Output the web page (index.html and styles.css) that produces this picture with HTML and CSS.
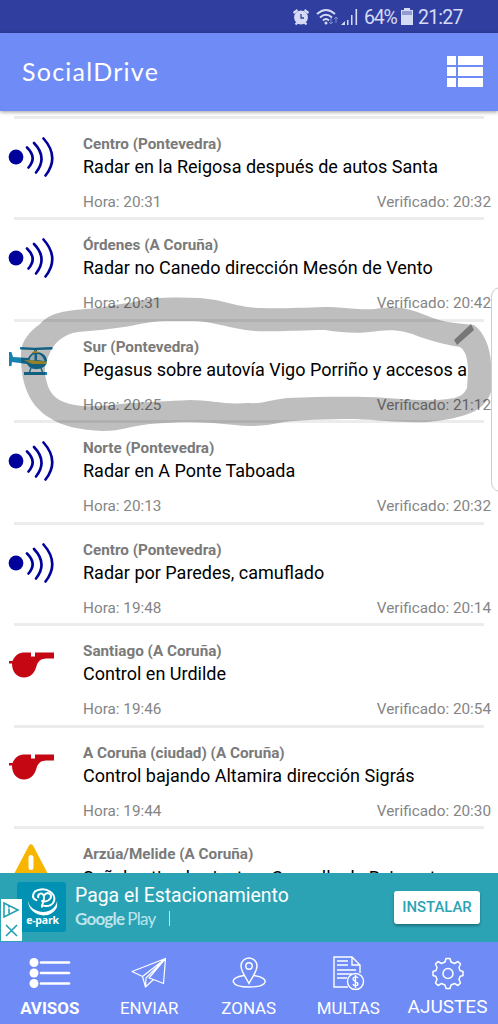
FILE: index.html
```html
<!DOCTYPE html>
<html lang="es">
<head>
<meta charset="utf-8">
<title>SocialDrive</title>
<link rel="stylesheet" href="styles.css">
</head>
<body>
<svg class="defs" width="0" height="0">
  <symbol id="radar" viewBox="0 0 48 42">
    <circle cx="8" cy="21" r="7.4" fill="#00009b"/>
    <g fill="none" stroke="#00009b" stroke-width="2.600" stroke-linecap="round">
      <path d="M19 11.500q10.500 10 1.500 20M26 7q14 14.500 2 29.500M35.500 2.500q16.500 18.500 2 37"/>
    </g>
  </symbol>
  <symbol id="whistle" viewBox="0 0 46 28">
    <path fill="#c40712" d="M0 10h3.500C6 4 10 1.500 16 1.500h6v4h4v-4h19v6h-6c-7 0-9 2-11 6-2 8-6 13-13 13C8 26.500 3 21 3 12.500H0z"/>
  </symbol>
  <symbol id="copter" viewBox="0 0 46 32">
    <path fill="#1782af" d="M11 1l14 .7L43.500 1v2.500L28 4v3h-3V4L11 3.500zM0 6h2.500l1.500 5 15 1c2-4 5-6 9-6 6 0 11 5 10 11-3 7-16 9-20 1L3 16l-.5 4H0zM15 26h23v3H15z"/>
    <path fill="#d3e2e8" d="M25.500 8v6.500h-5c.5-3 2-5.500 5-6.500zM28 8c4 0 6 3 7.500 7l-7.500-1z"/>
    <path fill="#c8ac32" d="M22.500 7l4-3 4 3zM15 14l23 1.500-1 2.500-14 0z"/>
    <path stroke="#1782af" stroke-width="1.400" fill="none" d="M22 22l-1.500 4M32 22l1.500 4"/>
  </symbol>
</svg>

<div class="status">
  <svg width="18" height="18" viewBox="0 0 17 18"><circle cx="8.500" cy="9.500" r="6.900" fill="#d5dbf5"/><path d="M1 5l4-3M16 5l-4-3M3 16.500l2-2M14 16.500l-2-2" stroke="#d5dbf5" stroke-width="2.200"/><path d="M8.500 6v4h3" fill="none" stroke="#303f9f" stroke-width="1.300"/></svg>
  <svg class="wifi" width="23" height="18" viewBox="0 0 23 18"><g fill="none" stroke="#d5dbf5" stroke-width="1.900"><path d="M1 6q9-8 18 0M4 9.500q6-5.500 12 0M7 12.500q3-3 6 0"/></g><circle cx="10" cy="15" r="1.500" fill="#d5dbf5"/><path d="M15 10v6m-2-2l2 2 2-2M20 15V9m-2 2l2-2 2 2" fill="none" stroke="#7f8bd0"/></svg>
  <svg class="signal" width="18" height="18" viewBox="0 0 18 18"><path d="M1 17l4-4v4zM7 12h1.500v5H7zM11 7h1.500v10H11zM15.500 1h1.600v16h-1.600z" fill="#d5dbf5"/></svg>
  <span class="pct">64%</span>
  <svg class="battery" width="12" height="18" viewBox="0 0 12 18"><path d="M3 0h6v2h3v15H0V2h3z" fill="#d5dbf5"/><path d="M1 3h10v4H1z" fill="#929dcf"/></svg>
  <span class="clock">21:27</span>
</div>

<header class="bar">
  <h1>SocialDrive</h1>
  <svg width="36" height="32" viewBox="0 0 36 32"><path fill="#fff" d="M0 0h9v9H0zM11 0h25v9H11zM0 11h9v9H0zM11 11h25v9H11zM0 22h9v9H0zM11 22h25v9H11z"/></svg>
</header>

<main class="feed">
  <article class="row"><svg class="radar"><use href="#radar"/></svg><div class="body"><h2>Centro (Pontevedra)</h2><p>Radar en la Reigosa después de autos Santa</p><div class="meta"><span>Hora: 20:31</span><span>Verificado: 20:32</span></div></div></article>
  <article class="row"><svg class="radar"><use href="#radar"/></svg><div class="body"><h2>Órdenes (A Coruña)</h2><p>Radar no Canedo dirección Mesón de Vento</p><div class="meta"><span>Hora: 20:31</span><span>Verificado: 20:42</span></div></div></article>
  <article class="row"><svg class="copter"><use href="#copter"/></svg><div class="body"><h2>Sur (Pontevedra)</h2><p>Pegasus sobre autovía Vigo Porriño y accesos a</p><div class="meta"><span>Hora: 20:25</span><span>Verificado: 21:12</span></div></div></article>
  <article class="row"><svg class="radar"><use href="#radar"/></svg><div class="body"><h2>Norte (Pontevedra)</h2><p>Radar en A Ponte Taboada</p><div class="meta"><span>Hora: 20:13</span><span>Verificado: 20:32</span></div></div></article>
  <article class="row"><svg class="radar"><use href="#radar"/></svg><div class="body"><h2>Centro (Pontevedra)</h2><p>Radar por Paredes, camuflado</p><div class="meta"><span>Hora: 19:48</span><span>Verificado: 20:14</span></div></div></article>
  <article class="row"><svg class="whistle"><use href="#whistle"/></svg><div class="body"><h2>Santiago (A Coruña)</h2><p>Control en Urdilde</p><div class="meta"><span>Hora: 19:46</span><span>Verificado: 20:54</span></div></div></article>
  <article class="row"><svg class="whistle"><use href="#whistle"/></svg><div class="body"><h2>A Coruña (ciudad) (A Coruña)</h2><p>Control bajando Altamira dirección Sigrás</p><div class="meta"><span>Hora: 19:44</span><span>Verificado: 20:30</span></div></div></article>
  <article class="row"><svg class="warning" viewBox="0 0 34 30"><path d="M15 1.500q2-2.500 4 0L34 30H0z" fill="#f8b500"/><path d="M17 13.500v10" stroke="#fff" stroke-width="5" stroke-linecap="round"/></svg><div class="body"><h2>Arzúa/Melide (A Coruña)</h2><p class="low">Señal activada viento a Cancelle de Reimonte</p></div></article>
</main>

<svg class="marker" width="498" height="1024" viewBox="0 0 498 1024">
  <path fill="#000" fill-opacity=".255" fill-rule="evenodd" d="M21 352C22 340 30 331 40 324C50 313 62 311 85 309C105 308 115 304 130 303C150 297 175 297 200 298C225 300 235 307 260 308C290 309 310 307 330 307C350 308 360 310 375 309C395 306 407 308 420 313C435 319 440 321 455 323L474 325C484 332 490 347 491 363L491 392C488 401 483 406 475 411C460 418 445 420 428 422C400 423 380 420 355 419C325 419 300 420 284 422C267 426 250 427 235 425C210 422 185 421 150 424C130 426 122 431 103 431C80 430 61 426 50 418C31 407 20 386 21 352ZM49 355C53 343 64 334 78 332C101 330 122 328 140 324C158 320 171 321 190 321C215 321 229 329 255 331C285 332 300 330 325 330C345 333 359 334 378 331C395 329 406 331 420 337C438 343 448 345 460 347C467 352 468 362 468 373L467 388C463 397 455 398 448 399C427 402 407 399 387 398C353 396 322 397 287 398C270 400 263 404 248 403C225 405 210 400 190 400C165 401 150 402 131 403C110 405 90 408 75 405C58 402 50 395 47 383C44 373 44 365 49 355Z"/>
  <path d="M454 340l17-16 3 6-17 15z" fill="#777"/>
  <path d="M499 287.500q-7.500 2-7.500 10v184q0 8 7.500 10" fill="#fff" stroke="#ccc"/>
</svg>

<aside class="ad">
  <div class="logo">
    <svg width="32" height="30" viewBox="0 0 34 30"><g fill="none" stroke="#fff" stroke-width="2.100" stroke-linecap="round"><path d="M10 13C4 11 6 3 13 2c9-2 17 4 16 11-1 5-6 7-11 6M12 10c-1-4 5-6 6-1 1 5-3 9-2 11M18 8c4-5 9-1 7 3-2 3-6 4-9 3"/></g><path d="M1 13c1 14 27 19 31 1v6c-6 15-31 11-31-7z" fill="#fff"/></svg>
    <b>e-park</b>
  </div>
  <div class="copy">
    <div class="line">Paga el Estacionamiento</div>
    <div class="sub"><span class="google">Google</span><span class="play">Play</span><i></i></div>
  </div>
  <div class="install">INSTALAR</div>
  <svg class="choices" width="21" height="42" viewBox="0 0 21 42"><path fill="#fff" d="M0 0h21v42H0z"/><g fill="none" stroke="#249eb2" stroke-width="1.600"><path d="M3 4v14l14-7zM8 9.500v5M5 26l11 11M16 26L5 37"/></g><circle cx="8" cy="7.800" r="1" fill="#249eb2"/></svg>
</aside>

<nav class="tabs">
  <div class="tab on"><svg width="42" height="32" viewBox="0 0 42 32"><g fill="#fff"><circle cx="5" cy="5" r="4.500"/><circle cx="5" cy="15.500" r="4.500"/><circle cx="5" cy="26" r="4.500"/></g><path d="M12 5h28M12 15.500h28M12 26h28" stroke="#fff" stroke-width="2.700" stroke-linecap="round"/></svg><span>AVISOS</span></div>
  <div class="tab"><svg width="36" height="32" viewBox="0 0 36 32"><path d="M1 14L34.500 1l-2 25-10-4-8 7.500-3-10.500zM1 14l10.500 5L34.500 1 15 20.500l-.5 9M34.500 1L18 20.500l4.500 1.500" fill="none" stroke="#fff" stroke-width="1.200" stroke-linejoin="round"/></svg><span>ENVIAR</span></div>
  <div class="tab"><svg width="34" height="32" viewBox="0 0 34 32"><g fill="none" stroke="#fff" stroke-width="1.400"><path d="M17 26C14 20 9 14 9 8.500a8 8 0 0 1 16 0c0 5.500-5 11.500-8 17.500z"/><circle cx="17" cy="8.500" r="3.200"/><path d="M12 18C-4 20-2 29.500 17 29.500s22-9 5-11.500"/></g></svg><span>ZONAS</span></div>
  <div class="tab"><svg width="33" height="35" viewBox="0 0 33 35"><g fill="none" stroke="#fff" stroke-width="1.400"><path d="M16 31H2V1h18l8 8v8M20 1v8h8M5 5h11M5 9h11M5 14h19M5 18h15M5 22h10"/><circle cx="23.500" cy="25.500" r="8"/><path d="M26 22c-1-2-5-1-5 1 0 3 5 2 5 5 0 2-4 3-5 0M23.500 19v13"/></g></svg><span>MULTAS</span></div>
  <div class="tab big"><svg width="32" height="32" viewBox="0 0 32 32"><g fill="none" stroke="#fff" stroke-width="1.500" stroke-linejoin="round"><path d="M13 4.500L14 1h4l1 3.500 3.500 1.500L26 4l2.500 2.500L27 10l1 3 3 1v4l-3 1-1 3 1.500 3.500L26 28l-3.500-2-3.500 1.500L18 31h-4l-1-3.500L9.500 26 6 28l-2.500-2.500L5 22l-1-3-3-1v-4l3-1 1-3-1.500-3.500L6 4l3.500 2z"/><circle cx="16" cy="16" r="5"/></g></svg><span>AJUSTES</span></div>
</nav>
</body>
</html>
```

FILE: styles.css
```css
* { box-sizing: border-box; }
body {
  margin: 0; width: 498px; height: 1024px; overflow: hidden; position: relative;
  display: flex; flex-direction: column; background: #fff;
  font-family: Roboto, "Noto Sans", sans-serif;
}
h1, h2, p { margin: 0; }
svg { display: block; flex: none; }
.defs { position: absolute; }

.status {
  height: 33px; flex: none; padding: 1px 35px 0 0; background: #303f9f; color: #d5dbf5;
  display: flex; align-items: center; justify-content: flex-end;
}
.status span { font-size: 19.5px; white-space: nowrap; }
.wifi { margin-left: 6px; }
.signal { margin-left: 1px; margin-right: 6px; }
.pct { width: 33px; letter-spacing: -1.2px; }
.battery { margin: 0 5px 0 4px; }
.clock { width: 45px; letter-spacing: -0.8px; }

.bar {
  height: 78px; flex: none; padding: 0 15px 0 22px; background: #6f8bf6; color: #fff;
  display: flex; align-items: center; justify-content: space-between;
  box-shadow: 0 1px 4px rgba(0, 0, 0, .4); z-index: 1;
}
.bar h1 { font: 400 25px/30px Lato, sans-serif; letter-spacing: 1.25px; padding-bottom: 2px; }

.feed { height: 762px; flex: none; overflow: hidden; padding-top: 5px; }
.feed::before { content: ""; display: block; height: 3px; margin: 0 14px; background: #ececec; }
.row { position: relative; height: 101.43px; display: flex; padding: 16px 7px 0 0; }
.row::after { content: ""; position: absolute; left: 14px; right: 14px; bottom: 0; height: 3px; background: #ececec; }
.row > svg { margin-left: 8px; margin-right: 27px; }
.radar { width: 48px; height: 42px; margin-top: 1px; }
.copter { width: 46px; height: 32px; margin-top: 8px; }
.row > .copter, .row > .whistle { margin-right: 28px; margin-left: 9px; }
.whistle { width: 46px; height: 28px; margin-top: 9px; }
.row > .warning { width: 34px; height: 30px; margin: -1px 35px 0 14px; }
.body { flex: 1; min-width: 0; }
.row h2 { font-size: 15.25px; line-height: 19px; font-weight: 700; color: #7a7a7a; white-space: nowrap; }
.row p { font-size: 18px; line-height: 24px; margin-top: 1px; color: #000; white-space: nowrap; }
.row .low { margin-top: 2px; }
.meta { display: flex; justify-content: space-between; margin-top: 14px; font-size: 15.3px; line-height: 18px; color: #858585; }

.marker { position: absolute; left: 0; top: 0; pointer-events: none; z-index: 2; }

.ad {
  position: relative; height: 69px; flex: none; background: #2ba3b5; color: #fff;
  display: flex; padding: 9px 18px 0 17px;
}
.logo {
  width: 49px; height: 50px; border-radius: 3px; background: #0091b3; flex: none;
  display: flex; flex-direction: column; align-items: center; padding: 5px 0 0 2px;
}
.logo b { font: 700 10.5px/11px "Open Sans", sans-serif; margin-top: -2px; letter-spacing: -.2px; }
.copy { flex: 1; padding-left: 9px; white-space: nowrap; }
.line { font-size: 19.4px; line-height: 28px; }
.sub { display: flex; align-items: center; font: 400 17px/17px Lato, sans-serif; color: #bce4ea; }
.google { font-weight: 700; letter-spacing: -.8px; }
.play { margin-left: 3px; letter-spacing: -.7px; }
.sub i { width: 1px; height: 15px; margin-left: 13px; background: #bce4ea; }
.install {
  width: 86px; height: 33px; margin-top: 9px; border-radius: 3px; background: #fff; color: #2ba3b5;
  font-size: 14.9px; font-weight: 500; line-height: 32px; text-align: center;
  box-shadow: 0 2px 3px rgba(0, 0, 0, .3);
}
.choices { position: absolute; left: 1px; top: 26px; }

.tabs { height: 82px; flex: none; background: #6f8bf6; color: #fff; display: grid; grid-template-columns: 99.5px 99.5px 99.5px 99.5px 99px; }
.tab { display: flex; flex-direction: column; align-items: center; padding-top: 14px; }
.tab svg { height: 35px; }
.tab span { font-size: 16.9px; line-height: 20px; margin-top: 7px; }
.on span { font-weight: 700; }
.big span { font-size: 19px; margin-top: 6px; }
```
